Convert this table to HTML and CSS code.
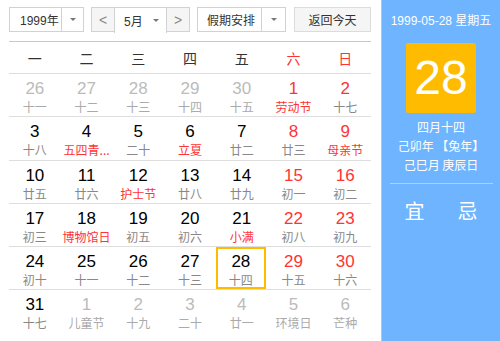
FILE: index.html
```html
<!DOCTYPE html>
<html lang="zh">
<head>
<meta charset="utf-8">
<link rel="stylesheet" href="styles.css">
</head>
<body>
<div class="cal">
  <div class="main">
    <div class="toolbar">
      <div class="sel sel-year"><span class="sel-text">1999年</span><span class="sel-arrow"><i class="tri"></i></span></div>
      <div class="month-group">
        <span class="nav-btn">&lt;</span>
        <div class="sel sel-month"><span class="sel-text">5月</span><span class="sel-arrow"><i class="tri"></i></span></div>
        <span class="nav-btn">&gt;</span>
      </div>
      <div class="sel sel-holiday"><span class="sel-text">假期安排</span><span class="sel-arrow"><i class="tri"></i></span></div>
      <div class="btn-today">返回今天</div>
    </div>
    <div class="weekhead">
      <span>一</span><span>二</span><span>三</span><span>四</span><span>五</span><span class="red">六</span><span class="red">日</span>
    </div>
    <div class="grid">
      <div class="row">
        <div class="cell other"><b>26</b><i>十一</i></div>
        <div class="cell other"><b>27</b><i>十二</i></div>
        <div class="cell other"><b>28</b><i>十三</i></div>
        <div class="cell other"><b>29</b><i>十四</i></div>
        <div class="cell other"><b>30</b><i>十五</i></div>
        <div class="cell wk"><b>1</b><i class="fest">劳动节</i></div>
        <div class="cell wk"><b>2</b><i>十七</i></div>
      </div>
      <div class="row">
        <div class="cell"><b>3</b><i>十八</i></div>
        <div class="cell"><b>4</b><i class="fest">五四青...</i></div>
        <div class="cell"><b>5</b><i>二十</i></div>
        <div class="cell"><b>6</b><i class="fest">立夏</i></div>
        <div class="cell"><b>7</b><i>廿二</i></div>
        <div class="cell wk"><b>8</b><i>廿三</i></div>
        <div class="cell wk"><b>9</b><i class="fest">母亲节</i></div>
      </div>
      <div class="row">
        <div class="cell"><b>10</b><i>廿五</i></div>
        <div class="cell"><b>11</b><i>廿六</i></div>
        <div class="cell"><b>12</b><i class="fest">护士节</i></div>
        <div class="cell"><b>13</b><i>廿八</i></div>
        <div class="cell"><b>14</b><i>廿九</i></div>
        <div class="cell wk"><b>15</b><i>初一</i></div>
        <div class="cell wk"><b>16</b><i>初二</i></div>
      </div>
      <div class="row">
        <div class="cell"><b>17</b><i>初三</i></div>
        <div class="cell"><b>18</b><i class="fest">博物馆日</i></div>
        <div class="cell"><b>19</b><i>初五</i></div>
        <div class="cell"><b>20</b><i>初六</i></div>
        <div class="cell"><b>21</b><i class="fest">小满</i></div>
        <div class="cell wk"><b>22</b><i>初八</i></div>
        <div class="cell wk"><b>23</b><i>初九</i></div>
      </div>
      <div class="row">
        <div class="cell"><b>24</b><i>初十</i></div>
        <div class="cell"><b>25</b><i>十一</i></div>
        <div class="cell"><b>26</b><i>十二</i></div>
        <div class="cell"><b>27</b><i>十三</i></div>
        <div class="cell today"><b>28</b><i>十四</i></div>
        <div class="cell wk"><b>29</b><i>十五</i></div>
        <div class="cell wk"><b>30</b><i>十六</i></div>
      </div>
      <div class="row last">
        <div class="cell"><b>31</b><i>十七</i></div>
        <div class="cell other"><b>1</b><i>儿童节</i></div>
        <div class="cell other"><b>2</b><i>十九</i></div>
        <div class="cell other"><b>3</b><i>二十</i></div>
        <div class="cell other"><b>4</b><i>廿一</i></div>
        <div class="cell other"><b>5</b><i>环境日</i></div>
        <div class="cell other"><b>6</b><i>芒种</i></div>
      </div>
    </div>
  </div>
  <div class="side">
    <div class="side-date">1999-05-28 星期五</div>
    <div class="side-day">28</div>
    <div class="side-lunar">四月十四</div>
    <div class="side-line">己卯年 【兔年】</div>
    <div class="side-line">己巳月 庚辰日</div>
    <div class="side-sep"></div>
    <div class="side-yiji"><span>宜</span><span>忌</span></div>
  </div>
</div>
</body>
</html>
```

FILE: styles.css
```css
* { box-sizing: border-box; }
html, body { margin: 0; padding: 0; background: #fff; }
body {
  font-family: "Liberation Sans", Arial, "Noto Sans CJK SC", sans-serif;
  width: 500px;
  height: 341px;
  overflow: hidden;
}
.cal {
  display: flex;
  height: 341px;
}
.main {
  width: 381px;
  padding: 7px 10px 0 9px;
}
.toolbar {
  display: flex;
  height: 25px;
  font-size: 12px;
  color: #333;
  white-space: nowrap;
}
.sel {
  display: flex;
  border: 1px solid #d2d2d2;
  background: #fff;
  height: 25px;
  align-items: stretch;
}
.sel-text {
  display: flex;
  align-items: center;
  padding-left: 10px;
  flex: 1;
}
.sel-arrow {
  width: 22px;
  border-left: 1px solid #d2d2d2;
  display: flex;
  align-items: center;
  justify-content: center;
}
.tri {
  width: 0;
  height: 0;
  border-left: 3.5px solid transparent;
  border-right: 3.5px solid transparent;
  border-top: 3.5px solid #777;
}
.sel-year { width: 75px; }
.month-group {
  display: flex;
  margin-left: 7px;
  width: 99px;
  border: 1px solid #d2d2d2;
  height: 25px;
}
.nav-btn {
  width: 22px;
  background: #f5f5f5;
  display: flex;
  align-items: center;
  justify-content: center;
  color: #888;
  font-size: 14px;
}
.sel-month {
  border: none;
  flex: 1;
  border-left: 1px solid #d2d2d2;
  border-right: 1px solid #d2d2d2;
}
.sel-month .sel-text { padding-left: 9px; }
.sel-month .sel-arrow { border-left: none; width: 20px; }
.sel-holiday { width: 89px; margin-left: 7px; }
.sel-holiday .sel-text { padding-left: 9px; }
.sel-holiday .sel-arrow { width: 24px; }
.btn-today {
  margin-left: 8px;
  width: 77px;
  border: 1px solid #dcdcdc;
  background: #f5f5f5;
  display: flex;
  align-items: center;
  justify-content: center;
}
.weekhead {
  margin-top: 9px;
  border-top: 1px solid #a9d0f8;
  border-bottom: 1px solid #dedede;
  height: 33px;
  display: grid;
  grid-template-columns: repeat(7, 1fr);
  align-items: center;
  text-align: center;
  font-size: 14px;
  color: #333;
  font-family: "Noto Sans CJK SC", sans-serif;
}
.weekhead .red { color: #f33; }
.row {
  display: grid;
  grid-template-columns: repeat(7, 1fr);
  height: 43.3px;
  border-bottom: 1px solid #dedede;
}
.row.last { border-bottom: none; }
.cell {
  display: flex;
  flex-direction: column;
  align-items: center;
  padding-top: 5px;
}
.cell b {
  font-weight: normal;
  font-size: 17px;
  line-height: 20px;
  color: #000;
}
.cell i {
  font-style: normal;
  font-size: 12px;
  line-height: 15px;
  color: #888;
  font-family: "Noto Sans CJK SC", sans-serif;
}
.cell.wk b { color: #f33; }
.cell .fest { color: #f33; }
.cell.other b { color: #bbb; }
.cell.other i { color: #aaa; }
.cell.today {
  border: 2px solid #ffbb00;
  width: 50px;
  padding-top: 3px;
}
.side {
  width: 119px;
  background: #6eb4ff;
  border-left: 1px solid #9ecbff;
  color: #fff;
  display: flex;
  flex-direction: column;
  align-items: center;
  font-family: "Liberation Sans", Arial, "Noto Sans CJK SC", sans-serif;
}
.side-date {
  margin-top: 13px;
  font-size: 12px;
  line-height: 16px;
}
.side-day {
  margin-top: 14px;
  width: 70px;
  height: 70px;
  background: #ffbb00;
  border-radius: 2px;
  font-size: 48px;
  line-height: 70px;
  text-align: center;
}
.side-lunar, .side-line {
  font-size: 12px;
  line-height: 19px;
  font-family: "Noto Sans CJK SC", sans-serif;
}
.side-lunar { margin-top: 4px; }
.side-sep {
  width: 103px;
  height: 1px;
  background: #a8d2ff;
  margin-top: 9px;
}
.side-yiji {
  display: flex;
  gap: 33px;
  margin-top: 12px;
  font-size: 20px;
  font-family: "Noto Sans CJK SC", sans-serif;
}
```
